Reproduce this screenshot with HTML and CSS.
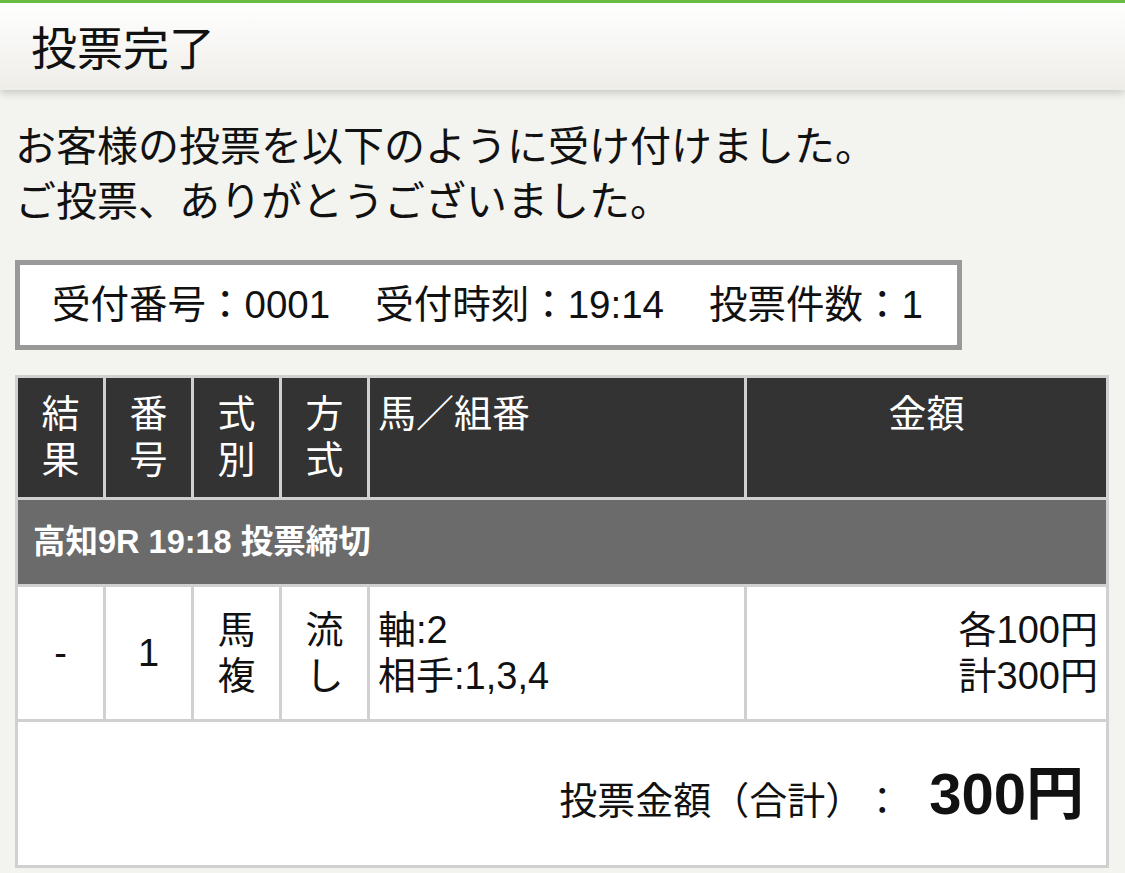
FILE: index.html
```html
<!DOCTYPE html>
<html lang="ja">
<head>
  <meta charset="UTF-8">
  <meta name="viewport" content="width=device-width, initial-scale=1.0">
  <title>投票完了</title>
  <link rel="stylesheet" href="styles.css">
</head>
<body>
  <header class="page-header">
    <h1>投票完了</h1>
  </header>

  <main class="content">
    <p class="message">お客様の投票を以下のように受け付けました。<br>ご投票、ありがとうございました。</p>

    <div class="receipt">
      <span>受付番号：0001</span>
      <span>受付時刻：19:14</span>
      <span>投票件数：1</span>
    </div>

    <div class="bet-table">
      <div class="th center">結<br>果</div>
      <div class="th center">番<br>号</div>
      <div class="th center">式<br>別</div>
      <div class="th center">方<br>式</div>
      <div class="th">馬／組番</div>
      <div class="th center">金額</div>

      <div class="race">高知9R 19:18 投票締切</div>

      <div class="td center">-</div>
      <div class="td center">1</div>
      <div class="td center">馬<br>複</div>
      <div class="td center">流<br>し</div>
      <div class="td">軸:2<br>相手:1,3,4</div>
      <div class="td right">各100円<br>計300円</div>

      <div class="total">
        <span class="total-label">投票金額（合計）：</span>
        <span class="total-amount">300円</span>
      </div>
    </div>
  </main>
</body>
</html>
```

FILE: styles.css
```css
body {
  margin: 0;
  background-color: #f3f3ef;
  color: #111;
  font-family: "Liberation Sans", "Noto Sans CJK JP", sans-serif;
  text-spacing-trim: space-all;
}
.page-header {
  box-sizing: border-box;
  height: 90px;
  border-top: 3px solid #68bd42;
  display: flex;
  align-items: center;
  padding: 4px 0 0 31px;
  background: linear-gradient(#ffffff, #eeede8);
  box-shadow: 0 3px 8px rgba(0, 0, 0, 0.18);
}
.page-header h1 {
  margin: 0;
  font-size: 46px;
  font-weight: normal;
  line-height: 1;
}
.content {
  padding: 30px 16px 0 15px;
}
.message {
  margin: 0 0 30px;
  font-size: 41px;
  line-height: 55px;
}
.receipt {
  display: inline-flex;
  gap: 45px;
  border: 5px solid #999;
  background-color: #fff;
  padding: 17px 34px 17px 32px;
  font-size: 38.5px;
  line-height: 46px;
  margin-bottom: 25px;
}
.bet-table {
  display: grid;
  grid-template-columns: 85px 85px 85px 85px 374px 359px;
  grid-template-rows: 119px 84px 132px 143px;
  gap: 3px;
  padding: 3px;
  background-color: #d0d0d0;
  font-size: 38px;
  line-height: 46px;
}
.th {
  background-color: #333;
  color: #fff;
  padding: 13px 8px 0;
}
.td {
  background-color: #fff;
  padding: 0 8px;
  display: flex;
  flex-direction: column;
  justify-content: center;
}
.center {
  text-align: center;
}
.right {
  text-align: right;
}
.race {
  grid-column: 1 / -1;
  background-color: #6b6b6b;
  color: #fff;
  font-size: 32.5px;
  font-weight: bold;
  display: flex;
  align-items: center;
  padding-left: 15px;
}
.total {
  grid-column: 1 / -1;
  background-color: #fff;
  display: flex;
  justify-content: flex-end;
  align-items: baseline;
  padding: 49px 22px 0 0;
}
.total-amount {
  font-size: 58px;
  font-weight: bold;
  margin-left: 28px;
}
```
